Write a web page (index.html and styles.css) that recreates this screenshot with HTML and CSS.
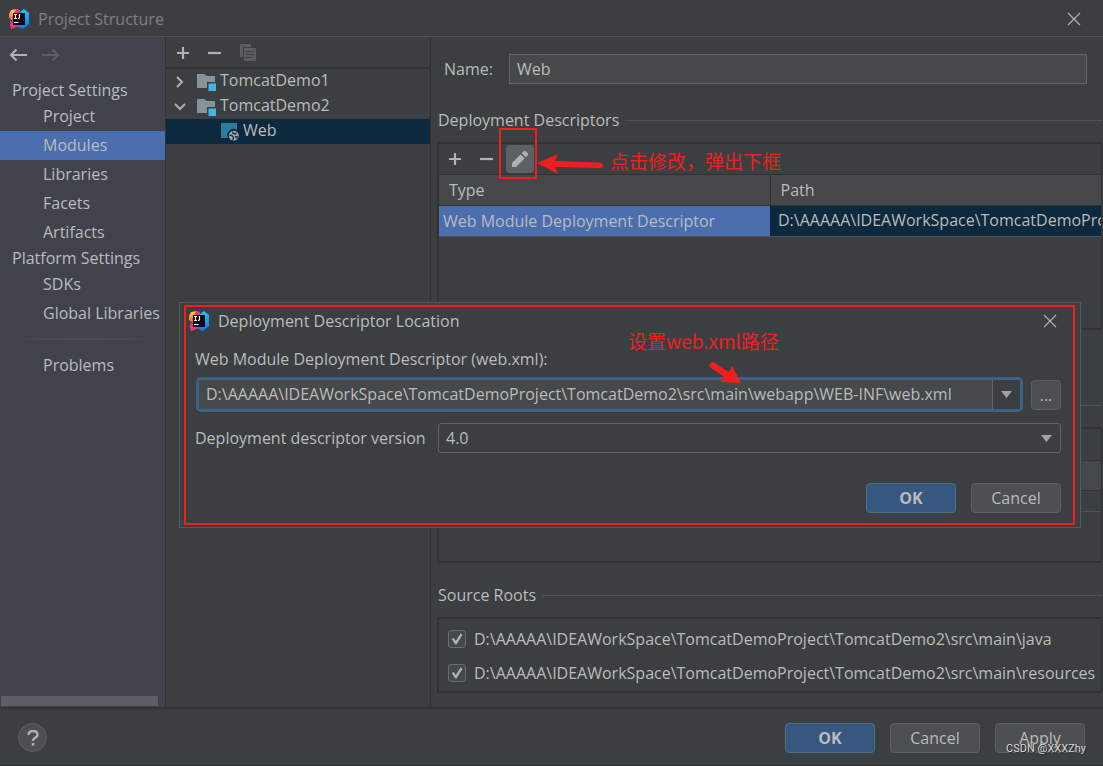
FILE: index.html
```html
<!DOCTYPE html>
<html lang="en">
<head>
<meta charset="utf-8">
<title>Project Structure</title>
<link rel="stylesheet" href="styles.css">
</head>
<body>
<svg width="0" height="0" class="defs" aria-hidden="true">
  <defs>
    <linearGradient id="warm" x1="0" y1="0" x2="0" y2="1">
      <stop offset="0" stop-color="#ffd23c"/><stop offset=".45" stop-color="#fb7a24"/><stop offset="1" stop-color="#f0409b"/>
    </linearGradient>
    <linearGradient id="cool" x1="0" y1="0" x2="0" y2="1">
      <stop offset="0" stop-color="#18c8f5"/><stop offset="1" stop-color="#1273ee"/>
    </linearGradient>
    <symbol id="logo" viewBox="0 0 20 20">
      <path d="M2 1 L8 0 L11 5 L9 16 L2 20 L1 15 L4 12 L0 9 L0 5 Z" fill="url(#warm)"/>
      <path d="M7 0 L11 1 L12 8 L5 12 L3 9 Z" fill="#f32c87"/>
      <path d="M12 2 L15 0 L20 4 L20 15 L14 20 L9 18 L7 13 Z" fill="url(#cool)"/>
      <path d="M1 12 L7 13 L10 17 L2 20 Z" fill="#f0317f"/>
      <path d="M4 4h12v12H4z" fill="#0b0508"/>
      <path d="M5 5.500h3M6.500 5.500v4M5 9.500h3M10.500 5v3.500q0 1-1.500 1" fill="none" stroke="#fff" stroke-width="1.100"/>
      <path d="M5 13.500h4.500" stroke="#fff" stroke-width="1"/>
    </symbol>
    <symbol id="close" viewBox="0 0 14 14"><path d="M1 1l12 12M13 1L1 13" stroke="currentColor" stroke-width="1.200" fill="none"/></symbol>
    <symbol id="plus" viewBox="0 0 14 14"><path d="M1 7h12M7 1v12" stroke="currentColor" stroke-width="2.200" fill="none"/></symbol>
    <symbol id="minus" viewBox="0 0 14 14"><path d="M0 7h13" stroke="currentColor" stroke-width="2.200" fill="none"/></symbol>
    <symbol id="arrow" viewBox="0 0 18 14"><path d="M2 7h16M7.500 1.500L2 7l5.500 5.500" stroke="currentColor" stroke-width="2.200" fill="none"/></symbol>
    <symbol id="folder" viewBox="0 0 20 18">
      <path d="M0 1h7l3 2h8v6h-8v6H0z" fill="#87939a"/>
      <path d="M11.500 10.500h7.500V18h-7.500z" fill="#40b6e0"/>
    </symbol>
    <symbol id="web" viewBox="0 0 18 18">
      <path d="M0 0h16v7a6.200 6.200 0 0 0-9 8H0z" fill="#2f7d9e"/>
      <circle cx="12.800" cy="12.800" r="5" fill="#9aa7b0"/>
      <path d="M8.500 12l2.500.5 1.500 2-.5 3M11.500 8.500l.5 2 2.500.5 1-1.500M14 13.500l2.500.5-1 2" stroke="#173447" stroke-width="1.300" fill="none"/>
    </symbol>
  </defs>
</svg>

<div class="window">
  <header class="titlebar">
    <svg class="logo"><use href="#logo"/></svg>
    <h1 class="title">Project Structure</h1>
    <button class="icon-btn close" aria-label="Close"><svg width="14" height="14"><use href="#close"/></svg></button>
  </header>

  <div class="body">
    <nav class="sidebar">
      <div class="history">
        <button class="icon-btn" aria-label="Back"><svg width="18" height="14"><use href="#arrow"/></svg></button>
        <button class="icon-btn forward" aria-label="Forward" disabled><svg width="18" height="14"><use href="#arrow"/></svg></button>
      </div>
      <h2 class="group">Project Settings</h2>
      <a class="item" href="#">Project</a>
      <a class="item selected" href="#">Modules</a>
      <a class="item" href="#">Libraries</a>
      <a class="item" href="#">Facets</a>
      <a class="item" href="#">Artifacts</a>
      <h2 class="group">Platform Settings</h2>
      <a class="item" href="#">SDKs</a>
      <a class="item" href="#">Global Libraries</a>
      <div class="divider"></div>
      <a class="item" href="#">Problems</a>
      <div class="scrollbar"></div>
    </nav>

    <section class="tree">
      <div class="tree-tools">
        <button class="icon-btn" aria-label="Add"><svg width="14" height="14"><use href="#plus"/></svg></button>
        <button class="icon-btn" aria-label="Remove"><svg width="14" height="14"><use href="#minus"/></svg></button>
        <button class="icon-btn copy" aria-label="Copy" disabled>
          <svg width="16" height="17" viewBox="0 0 16 17"><path d="M0 0h11v3H3v10H0z" fill="#5a5d5e"/><path d="M4 4h12v13H4z" fill="#5a5d5e"/><path d="M6 7.500h8M6 10.500h8M6 13.500h6" stroke="#3c3f41" stroke-width="1.200"/></svg>
        </button>
      </div>
      <ul class="nodes">
        <li class="node"><svg class="chevron" viewBox="0 0 12 12"><path d="M3 1l5 5-5 5" /></svg><svg class="folder"><use href="#folder"/></svg><span class="node-name">TomcatDemo1</span></li>
        <li class="node"><svg class="chevron" viewBox="0 0 12 12"><path d="M1 3l5 5 5-5" /></svg><svg class="folder"><use href="#folder"/></svg><span class="node-name">TomcatDemo2</span></li>
        <li class="node child"><svg class="web"><use href="#web"/></svg><span class="node-name">Web</span></li>
      </ul>
    </section>

    <main class="detail">
      <div class="name-row">
        <label for="name">Name:</label>
        <input id="name" class="name" type="text" value="Web">
      </div>

      <h2 class="section-title">Deployment Descriptors</h2>
      <div class="box descriptors">
        <div class="box-tools">
          <button class="icon-btn" aria-label="Add descriptor"><svg width="14" height="14"><use href="#plus"/></svg></button>
          <button class="icon-btn" aria-label="Remove descriptor"><svg width="14" height="14"><use href="#minus"/></svg></button>
          <button class="icon-btn edit" aria-label="Edit descriptor">
            <svg width="18" height="18" viewBox="0 0 18 18" fill="#afb1b3"><path d="M1 17v-4l8.500-8.500 4 4L5 17z"/><path d="M10.700 3.300l2-2q1-1 2 0l2 2q1 1 0 2l-2 2z"/></svg>
          </button>
        </div>
        <table class="table">
          <thead><tr><th>Type</th><th>Path</th></tr></thead>
          <tbody><tr><td class="type">Web Module Deployment Descriptor</td><td class="path">D:\AAAAA\IDEAWorkSpace\TomcatDemoProject\TomcatDemo2\src\main\webapp\WEB-INF\web.xml</td></tr></tbody>
        </table>
      </div>

      <div class="section-title lower"></div>
      <div class="box resources">
        <div class="blank-tools"></div>
        <div class="blank-head"></div>
        <div class="blank-row"></div>
      </div>

      <h2 class="section-title roots-title">Source Roots</h2>
      <div class="box roots">
        <label class="root"><input class="check" type="checkbox" checked>D:\AAAAA\IDEAWorkSpace\TomcatDemoProject\TomcatDemo2\src\main\java</label>
        <label class="root"><input class="check" type="checkbox" checked>D:\AAAAA\IDEAWorkSpace\TomcatDemoProject\TomcatDemo2\src\main\resources</label>
      </div>
    </main>
  </div>

  <footer class="footer">
    <button class="help" aria-label="Help"><svg width="12" height="16" viewBox="0 0 12 16"><path d="M1.500 5q0-4 4.500-4t4.500 3.500q0 2-2.300 3.300T6 11" fill="none" stroke="#afb1b3" stroke-width="2.400"/><path d="M4.700 13h2.600v2.600H4.700z" fill="#afb1b3"/></svg></button>
    <button class="btn primary">OK</button>
    <button class="btn">Cancel</button>
    <button class="btn">Apply</button>
  </footer>
</div>

<div class="dialog" role="dialog" aria-labelledby="dialog-title">
  <div class="dialog-frame">
    <div class="dialog-head">
      <svg class="logo"><use href="#logo"/></svg>
      <h2 class="title" id="dialog-title">Deployment Descriptor Location</h2>
      <button class="icon-btn close" aria-label="Close dialog"><svg width="14" height="14"><use href="#close"/></svg></button>
    </div>
    <div class="dialog-body">
      <label for="location">Web Module Deployment Descriptor (web.xml):</label>
      <div class="location-row">
        <div class="combo">
          <input id="location" class="combo-text" type="text" value="D:\AAAAA\IDEAWorkSpace\TomcatDemoProject\TomcatDemo2\src\main\webapp\WEB-INF\web.xml">
          <button class="combo-drop" aria-label="Recent paths"><svg width="11" height="7"><path d="M0 0h11L5.500 7z" fill="#a0a3a5"/></svg></button>
        </div>
        <button class="browse" aria-label="Browse">...</button>
      </div>
      <div class="version-row">
        <label for="version">Deployment descriptor version</label>
        <div class="select-wrap">
          <select id="version" class="version"><option>4.0</option></select>
          <svg class="select-arrow" width="11" height="7"><path d="M0 0h11L5.500 7z" fill="#a0a3a5"/></svg>
        </div>
      </div>
      <div class="dialog-actions">
        <button class="btn primary">OK</button>
        <button class="btn">Cancel</button>
      </div>
    </div>
  </div>
</div>

<div class="mark mark-edit"></div>
<svg class="mark arrow-edit" width="68" height="24" viewBox="0 0 68 24"><path d="M1 11L22 2l-3 7 45 1.500q3 .5 3 3t-3 2.500L19 15l3 7z" fill="#f01e1e"/></svg>
<p class="mark note note-edit">点击修改，弹出下框</p>
<p class="mark note note-path">设置web.xml路径</p>
<svg class="mark arrow-path" width="34" height="24" viewBox="0 0 34 24"><path d="M33 22L12 21l5-4.500L3 7Q0 5 2 2.500 4 0 7 2l14 9 3-6z" fill="#f01e1e"/></svg>
<p class="mark watermark">CSDN @XXXZhy</p>
</body>
</html>
```

FILE: styles.css
```css
* {
  box-sizing: border-box;
}

body {
  margin: 0;
  background: #3c3f41;
  color: #bbbbbb;
  font: 16px/22px "Open Sans", "Noto Sans", "Noto Sans CJK SC", sans-serif;
  overflow: hidden;
}

h1, h2, p, ul {
  margin: 0;
  padding: 0;
  font-size: inherit;
  font-weight: normal;
}

button, input, select {
  font: inherit;
  color: inherit;
  margin: 0;
  outline: none;
}

svg {
  display: block;
  flex: none;
}

.defs {
  position: absolute;
}

.window {
  display: flex;
  flex-direction: column;
  min-height: 100vh;
}

.icon-btn {
  display: flex;
  align-items: center;
  justify-content: center;
  padding: 0;
  border: 0;
  background: none;
  color: #afb1b3;
}

.logo {
  width: 20px;
  height: 20px;
}

/* Title bar */
.titlebar {
  display: flex;
  align-items: center;
  gap: 9px;
  height: 37px;
  padding: 1px 22px 0 9px;
  border-bottom: 1px solid #515151;
}

.titlebar .title {
  color: #7d7f80;
}

.close {
  margin-left: auto;
}

.body {
  display: flex;
  flex: 1;
}

/* Sidebar */
.sidebar {
  display: flex;
  flex-direction: column;
  flex: none;
  width: 166px;
  background: #40434c;
  border-right: 1px solid #323232;
}

.history {
  display: flex;
  gap: 15px;
  height: 42px;
  padding: 11px 9px;
  align-items: flex-start;
}

.history .icon-btn {
  height: 14px;
}

.history .forward {
  color: #5b5e62;
}

.forward svg {
  transform: scaleX(-1);
}

.group {
  padding-left: 12px;
  height: 23px;
}

.item {
  padding: 3px 0 4px 43px;
  color: inherit;
  text-decoration: none;
  white-space: nowrap;
}

.item.selected {
  background: #4b6eaf;
}

.divider {
  height: 2px;
  margin: 10px 8px 11px 12px;
  background: linear-gradient(90deg, transparent, #4c4e54 40%, #4c4e54 60%, transparent);
}

.scrollbar {
  width: 157px;
  height: 10px;
  margin: auto 0 1px 1px;
  background: #5c5f67;
}

/* Module tree */
.tree {
  flex: none;
  width: 265px;
  border-right: 1px solid #323232;
}

.tree-tools {
  display: flex;
  align-items: center;
  gap: 18px;
  height: 32px;
  padding: 1px 10px 0;
  border-bottom: 2px solid #323232;
}

.nodes {
  list-style: none;
}

.node {
  display: flex;
  align-items: center;
  height: 25px;
  padding-left: 8px;
}

.node-name {
  padding-bottom: 3px;
}

.node.child {
  padding-left: 55px;
  background: #0d293e;
}

.chevron {
  width: 12px;
  height: 12px;
  margin-right: 11px;
  fill: none;
  stroke: #afb1b3;
  stroke-width: 2;
}

.folder {
  width: 20px;
  height: 18px;
  margin-right: 3px;
}

.web {
  width: 18px;
  height: 18px;
  margin-right: 4px;
}

/* Details */
.detail {
  flex: 1;
  min-width: 0;
  padding: 17px 1px 14px 7px;
}

.name-row {
  display: flex;
  align-items: center;
  gap: 16px;
  padding: 0 15px 0 6px;
  margin-bottom: 25px;
}

.name {
  flex: 1;
  min-width: 0;
  height: 30px;
  padding: 0 7px 1px;
  border: 1px solid #646464;
  background: #45494a;
}

.section-title {
  display: flex;
  align-items: center;
  gap: 6px;
  height: 22px;
  margin-bottom: 11px;
}

.section-title::after {
  content: "";
  flex: 1;
  height: 1px;
  background: #515355;
}

.lower {
  margin-top: 64px;
}

.roots-title {
  margin-top: 21px;
}

.box {
  border: 2px solid #323232;
  border-right-width: 1px;
  margin-left: -1px;
}

.descriptors {
  height: 188px;
}

.box-tools {
  display: flex;
  align-items: center;
  gap: 18px;
  height: 30px;
  padding-left: 9px;
}

.edit {
  width: 28px;
  height: 28px;
  margin-left: -6px;
  border-radius: 4px;
  background: #5c6164;
}

.table {
  width: 100%;
  table-layout: fixed;
  border-collapse: collapse;
}

.table th {
  height: 31px;
  padding: 0 10px;
  border: 1px solid #323232;
  border-width: 1px 0;
  background: #45484a;
  font-weight: normal;
  text-align: left;
}

.table th + th {
  border-left: 1px solid #323232;
}

.table td {
  height: 31px;
  padding: 0 4px;
  white-space: nowrap;
  overflow: hidden;
  border-bottom: 1px solid #515355;
}

.table .type {
  background: #4b6eaf;
}

.table .path {
  padding: 0 0 2px 8px;
  background: #0d293e;
}

.resources {
  height: 136px;
}

.blank-tools {
  height: 31px;
}

.blank-head {
  height: 31px;
  border: 1px solid #323232;
  border-width: 1px 0;
  background: #45484a;
}

.blank-row {
  height: 21px;
  border-bottom: 1px solid #515355;
}

.roots {
  padding: 3px 0 1px 9px;
}

.root {
  display: flex;
  align-items: center;
  gap: 8px;
  height: 34px;
  white-space: nowrap;
}

.check {
  appearance: none;
  flex: none;
  width: 18px;
  height: 18px;
  border: 1px solid #6b6b6b;
  border-radius: 3px;
  background: #43494a;
  display: grid;
  place-items: center;
}

.check:checked::before {
  content: "";
  width: 12px;
  height: 12px;
  background: #afb1b3;
  clip-path: polygon(6% 50%, 22% 42%, 40% 66%, 80% 4%, 96% 14%, 46% 96%, 36% 96%);
}

/* Footer */
.footer {
  display: flex;
  align-items: center;
  gap: 15px;
  height: 59px;
  padding: 1px 18px 0;
  border-top: 2px solid #323232;
  border-bottom: 1px solid #323232;
}

.help {
  display: grid;
  place-items: center;
  width: 29px;
  height: 29px;
  margin-right: auto;
  padding: 0;
  border: 1px solid #5e6060;
  border-radius: 50%;
  background: #4c5052;
}

.btn {
  width: 90px;
  height: 30px;
  padding: 0;
  border: 1px solid #5e6060;
  border-radius: 4px;
  background: #4c5052;
}

.btn.primary {
  border-color: #4c708c;
  background: #365880;
  font-weight: bold;
}

/* Dialog floating over the window */
.dialog {
  position: absolute;
  top: 302px;
  left: 179px;
  right: 22px;
  padding: 2px 5px 2px 4px;
  border: 1px solid #57595b;
  background: #3c3f41;
}

.dialog-frame {
  border: 2px solid #f01e1e;
}

.dialog-head {
  display: flex;
  align-items: center;
  gap: 9px;
  height: 28px;
  padding: 0 16px 0 3px;
}

.dialog-body {
  padding: 13px 12px 10px 9px;
}

.location-row {
  display: flex;
  align-items: center;
  gap: 8px;
  margin: 7px 0 11px 1px;
}

.combo {
  display: flex;
  flex: 1;
  min-width: 0;
  height: 35px;
  border: 3px solid #3d6185;
  border-radius: 5px;
  background: #45494a;
}

.combo-text {
  flex: 1;
  min-width: 0;
  padding: 0 7px 1px;
  border: 0;
  background: #45494a;
}

.combo-drop {
  display: grid;
  place-items: center;
  width: 28px;
  padding: 0;
  border: 0;
  border-left: 1px solid #646464;
  background: #3c3f41;
}

.browse {
  width: 30px;
  height: 30px;
  padding: 0;
  border: 1px solid #5e6060;
  border-radius: 4px;
  background: #4c5052;
}

.version-row {
  display: grid;
  grid-template-columns: 243px 1fr;
  align-items: center;
}

.select-wrap {
  display: grid;
  align-items: center;
}

.version {
  grid-area: 1 / 1;
  appearance: none;
  width: 100%;
  height: 30px;
  padding: 0 7px;
  border: 1px solid #646464;
  border-radius: 3px;
  background: #3c3f41;
}

.select-arrow {
  grid-area: 1 / 1;
  justify-self: end;
  margin-right: 9px;
  pointer-events: none;
}

.dialog-actions {
  display: flex;
  justify-content: flex-end;
  gap: 15px;
  margin-top: 30px;
}

/* Annotations drawn over the window */
.mark {
  position: absolute;
  pointer-events: none;
}

.mark-edit {
  top: 128px;
  left: 499px;
  width: 38px;
  height: 51px;
  border: 2px solid #f01e1e;
}

.arrow-edit {
  top: 152px;
  left: 536px;
}

.note {
  color: #f01e1e;
  font-family: "Noto Sans CJK SC", sans-serif;
  font-size: 19px;
  white-space: nowrap;
}

.note-edit {
  top: 150px;
  left: 610px;
}

.note-path {
  top: 330px;
  left: 628px;
}

.arrow-path {
  top: 361px;
  left: 708px;
}

.watermark {
  right: 17px;
  bottom: 6px;
  color: #d8d8d8;
  font: 11px/22px Roboto, sans-serif;
  text-shadow: 1px 1px 1px #222222;
}
```
